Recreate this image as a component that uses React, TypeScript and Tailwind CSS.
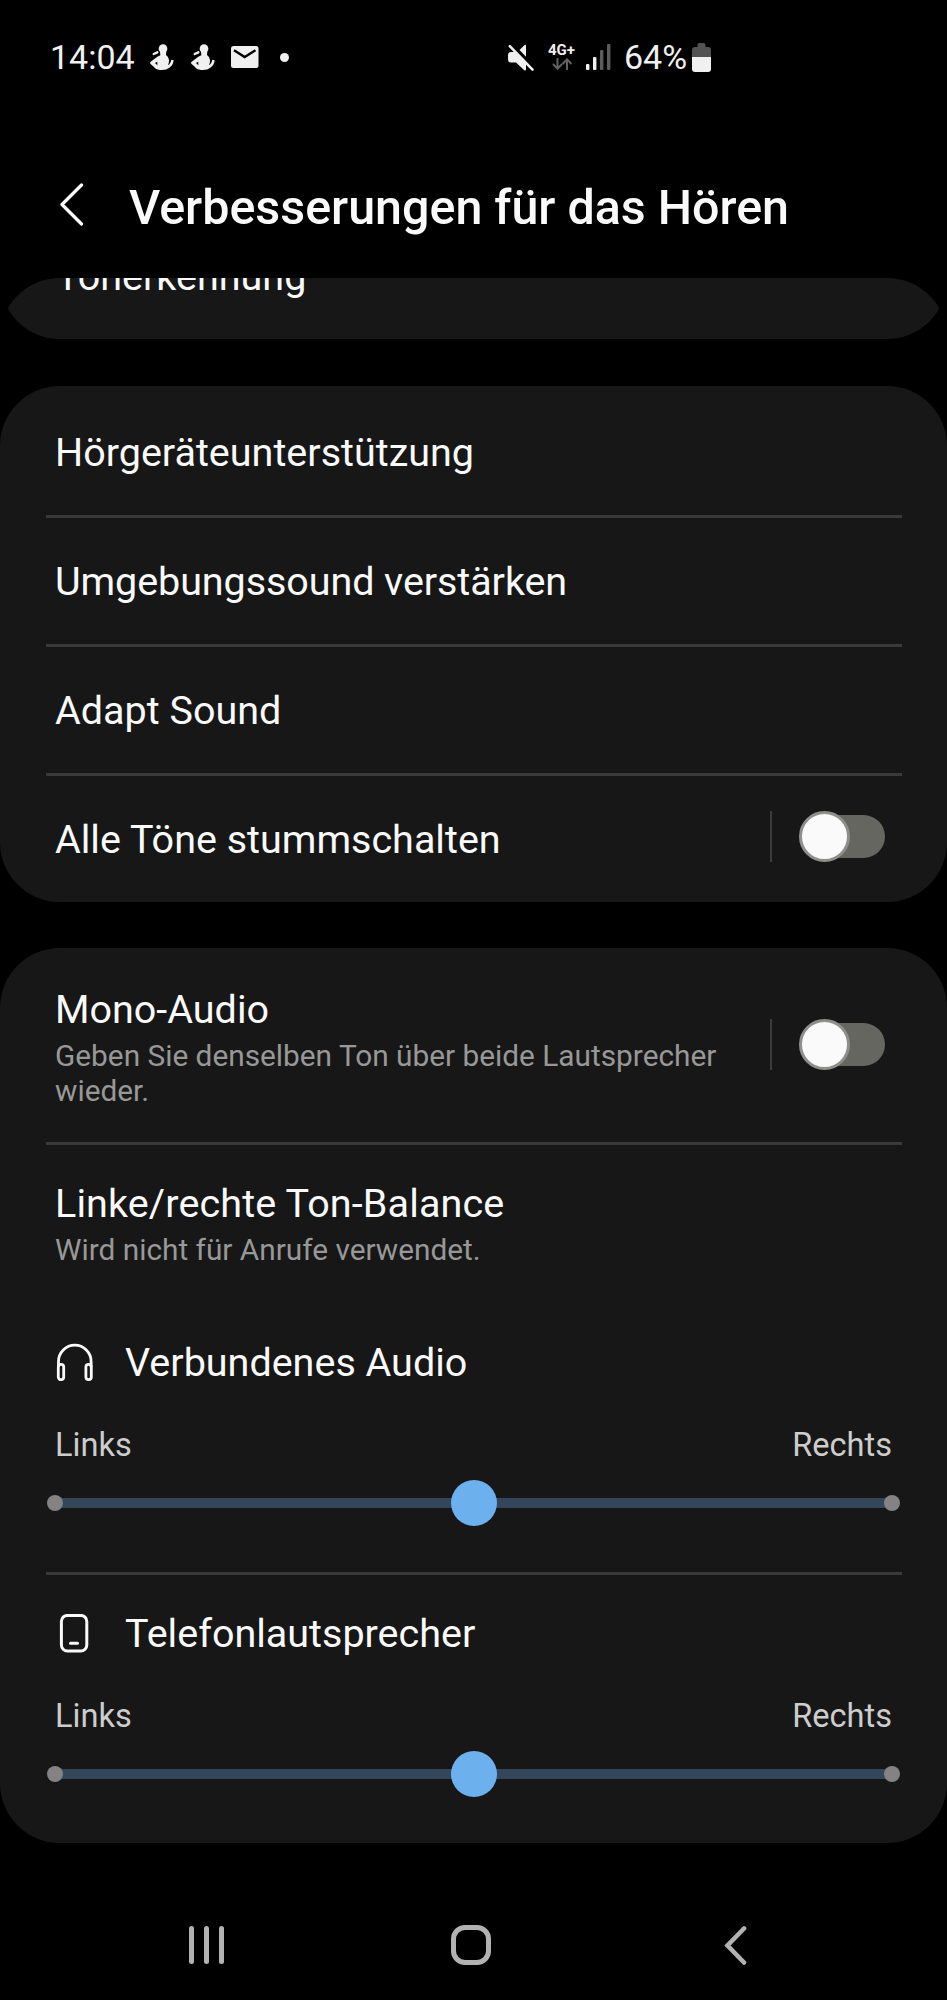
import type { ReactNode } from "react";

const Toggle = () => (
  <div className="flex items-center">
    <div className="w-[2px] h-[51px] bg-[#3c3c3c]" />
    <div className="ml-[27px] w-[86px] h-[51px] relative flex items-center">
      <div className="ml-[3px] w-[83px] h-[43px] rounded-full bg-[#65665f]" />
      <div className="absolute left-0 top-0 w-[51px] h-[51px] rounded-full bg-[#fafafa] border-3 border-[#8e8e8d]" />
    </div>
  </div>
);

const Divider = () => <div className="ml-[46px] mr-[45px] h-[3px] bg-[#3a3a3a]" />;

const Label = ({ children }: { children: ReactNode }) => (
  <div className="text-[39.5px] leading-[46px] text-[#fafafa] whitespace-nowrap">
    {children}
  </div>
);

const Hint = ({ children }: { children: ReactNode }) => (
  <div className="mt-[5px] text-[29.8px] leading-[35px] text-[#989898]">
    {children}
  </div>
);

const Row = ({ title, toggle }: { title: string; toggle?: boolean }) => (
  <div className="h-[126px] pl-[55px] pr-[62px] pb-[5px] flex items-center justify-between">
    <div className="pt-[6px]">
      <Label>{title}</Label>
    </div>
    {toggle && <Toggle />}
  </div>
);

const Balance = ({ title, icon }: { title: string; icon: ReactNode }) => (
  <div className="pt-[36px] pb-[45px]">
    <div className="pl-[55px] flex items-center">
      <div className="w-[70px]">{icon}</div>
      <Label>{title}</Label>
    </div>
    <div className="mt-[39px] px-[55px] flex justify-between text-[32.6px] leading-[40px] text-[#cdcdcd]">
      <span>Links</span>
      <span>Rechts</span>
    </div>
    <div className="mt-[14px] mx-[47px] h-[48px] relative flex items-center">
      <div className="mx-2 h-[10px] grow bg-[#34475a]" />
      <div className="absolute left-0 top-4 w-4 h-4 rounded-full bg-[#838383]" />
      <div className="absolute right-0 top-4 w-4 h-4 rounded-full bg-[#838383]" />
      <div className="absolute left-1/2 top-[1px] -ml-[23px] w-[46px] h-[46px] rounded-full bg-[#6cb0ee]" />
    </div>
  </div>
);

const Figure = () => (
  <svg className="w-6 h-[27px]" viewBox="0 0 72 81" fill="#f0f0f0">
    <circle cx="39" cy="14" r="13" />
    <path d="M11 30 L22 25" stroke="#f0f0f0" strokeWidth="7" strokeLinecap="round" />
    <path
      fillRule="evenodd"
      d="M30 22 L49 22 L48 33 Q58 40 57 50 Q57 57 54 63 Q61 60 64 47 L71 49 Q69 65 58 71 Q48 80 30 78 Q16 76 12 69 L1 59 Q-1 56 2 53 L22 38 L31 34 Z M15 57 L22 64 L22 53 Z"
    />
  </svg>
);

const StatusBar = () => (
  <div className="h-[114px] pl-[50px] flex items-center text-[#f0f0f0]">
    <span className="w-[100px] text-[34px] leading-[40px]">14:04</span>
    <Figure />
    <div className="w-[17px]" />
    <Figure />
    <svg className="ml-4 w-[28px] h-[22px]" viewBox="0 0 28 22">
      <rect width="27.5" height="22" rx="2.5" fill="#f0f0f0" />
      <path d="M3 4.2 L13.7 11 L24.5 4.2" fill="none" stroke="#000" strokeWidth="2.4" />
    </svg>
    <div className="ml-[21px] w-[9px] h-[9px] rounded-full bg-[#f0f0f0]" />
    <svg className="ml-[218px] w-[27px] h-[27px]" viewBox="0 0 27 27">
      <path d="M10.5 8 L17.5 1 Q19 0 19 2 V25 Q19 27.5 17 26 L9 18.5 H4 Q1 18.5 1 15.5 V11 Q1 8 4 8 Z" fill="#f0f0f0" />
      <path d="M5 0.8 L28.5 25.2" stroke="#000" strokeWidth="3.5" />
      <path d="M2.8 2.2 L25.5 25.6" stroke="#f0f0f0" strokeWidth="2.6" strokeLinecap="round" />
    </svg>
    <div className="ml-[14px] w-[30px] flex flex-col">
      <span className="text-[15px] leading-[13px] font-bold">4G+</span>
      <svg className="ml-[4px] mt-[1px] w-[21px] h-[12px]" viewBox="0 0 21 12" fill="none" stroke="#626262" strokeWidth="2">
        <path d="M5.5 0 V10.5 M1 6 L5.5 10.7 L10 6" />
        <path d="M15 12 V1.5 M10.5 6 L15 1.3 L19.5 6" />
      </svg>
    </div>
    <svg className="ml-[8px] w-[25px] h-[27px]" viewBox="0 0 25 27">
      <rect x="0" y="20" width="3.4" height="6" rx="1" fill="#f0f0f0" />
      <rect x="7" y="13" width="3.4" height="13" rx="1" fill="#f0f0f0" />
      <rect x="14" y="6" width="3.4" height="20" rx="1" fill="#5c5c5c" />
      <rect x="21" y="0" width="3.4" height="26" rx="1" fill="#5c5c5c" />
    </svg>
    <span className="ml-[13px] w-[68px] text-[34px] leading-[40px]">64%</span>
    <svg className="w-[19px] h-[29px]" viewBox="0 0 19 29">
      <path d="M5.5 4 V2 Q5.5 0 7.5 0 H11.5 Q13.5 0 13.5 2 V4 H16 Q19 4 19 7 V14 H0 V7 Q0 4 3 4 Z" fill="#525252" />
      <path d="M0 14 H19 V26 Q19 29 16 29 H3 Q0 29 0 26 Z" fill="#f0f0f0" />
    </svg>
  </div>
);

const App = () => {
  return (
    <div className="w-[947px] h-[2000px] bg-black flex flex-col overflow-hidden font-['Roboto',sans-serif]">
      <StatusBar />
      <div className="h-[164px] pl-[60px] flex items-start">
        <svg className="mt-[69px] w-[24px] h-[43px]" viewBox="0 0 24 43" fill="none" stroke="#fafafa" strokeWidth="3.2" strokeLinecap="round" strokeLinejoin="round">
          <path d="M21.5 2 L2 21.5 L21.5 41" />
        </svg>
        <h1 className="ml-[45px] mt-[66px] text-[48.4px] leading-[56px] font-medium text-[#fafafa] whitespace-nowrap">
          Verbesserungen für das Hören
        </h1>
      </div>

      {/* scroll area, the first card is partly scrolled out */}
      <div className="rounded-t-[60px] overflow-hidden h-[1565px] shrink-0">
        <div className="-mt-[127px] h-[188px] pl-[56px] pt-[103px] rounded-[60px] bg-[#171717]">
          <Label>Tonerkennung</Label>
        </div>

        <div className="mt-[47px] pt-[3px] rounded-[60px] bg-[#171717]">
          <Row title="Hörgeräteunterstützung" />
          <Divider />
          <div className="tracking-[-0.08px]">
            <Row title="Umgebungssound verstärken" />
          </div>
          <Divider />
          <Row title="Adapt Sound" />
          <Divider />
          <Row title="Alle Töne stummschalten" toggle />
        </div>

        <div className="mt-[46px] rounded-[60px] bg-[#171717]">
          <div className="h-[194px] pl-[55px] pr-[62px] pb-[1px] flex justify-between">
            <div className="pt-[39px] w-[690px]">
              <Label>Mono-Audio</Label>
              <Hint>Geben Sie denselben Ton über beide Lautsprecher wieder.</Hint>
            </div>
            <Toggle />
          </div>
          <Divider />
          <div className="h-[159px] pl-[55px] pt-[36px]">
            <div className="tracking-[0.12px]">
              <Label>Linke/rechte Ton-Balance</Label>
            </div>
            <Hint>Wird nicht für Anrufe verwendet.</Hint>
          </div>
          <Balance
            title="Verbundenes Audio"
            icon={
              <svg className="w-[40px] h-[40px]" viewBox="0 0 40 40" fill="none" stroke="#fafafa" strokeWidth="2.8">
                <path d="M3.5 24 V18.5 A16.3 16.3 0 0 1 36.1 18.5 V24" />
                <rect x="3.3" y="21.3" width="5.4" height="15.4" rx="2.7" />
                <rect x="30.9" y="21.3" width="5.4" height="15.4" rx="2.7" />
              </svg>
            }
          />
          <Divider />
          <Balance
            title="Telefonlautsprecher"
            icon={
              <svg className="w-[40px] h-[40px]" viewBox="0 0 40 40" fill="none" stroke="#fafafa" strokeWidth="3">
                <rect x="6.4" y="1.4" width="25.4" height="35.6" rx="6" />
                <path d="M15.5 29.2 H22.5" strokeLinecap="round" />
              </svg>
            }
          />
        </div>
      </div>

      <div className="h-[157px] shrink-0 flex items-center pl-[189px] pt-[47px]">
        <div className="flex gap-[10px]">
          <div className="w-[5px] h-[38px] rounded-full bg-[#b2b2b2]" />
          <div className="w-[5px] h-[38px] rounded-full bg-[#b2b2b2]" />
          <div className="w-[5px] h-[38px] rounded-full bg-[#b2b2b2]" />
        </div>
        <div className="ml-[227px] w-[40px] h-[40px] rounded-[14px] border-5 border-[#b2b2b2]" />
        <svg className="ml-[233px] w-[24px] h-[39px]" viewBox="0 0 24 39" fill="none" stroke="#b2b2b2" strokeWidth="4.6" strokeLinecap="round">
          <path d="M20 2.5 L3.5 19.5 L20 36.5" />
        </svg>
      </div>
    </div>
  );
};

export default App;
